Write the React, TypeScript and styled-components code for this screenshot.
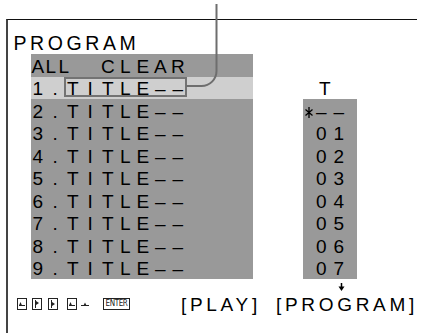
import React from 'react'
import styled, { createGlobalStyle } from 'styled-components'

const GlobalStyle = createGlobalStyle`
  body {
    margin: 0;
    background: #fff;
    color: #000;
    font-family: 'Liberation Sans', Arial, sans-serif;
  }
`

const Screen = styled.div`
  position: relative;
  width: 427px;
  height: 333px;
  padding: 19px 0 0 6px;
  box-sizing: border-box;
  overflow: hidden;
`

const Frame = styled.div`
  width: 411px;
  height: 314px;
  border-top: 1px solid #111;
  border-left: 2px solid #444;
  box-sizing: border-box;
`

const Title = styled.div`
  height: 34px;
  padding: 13px 0 0 5.5px;
  box-sizing: border-box;
  font-size: 19.5px;
  line-height: 20px;
  letter-spacing: 3.6px;
`

const Body = styled.div`
  display: flex;
  align-items: flex-start;
  padding-left: 23px;
  height: 236px;
`

const List = styled.div`
  width: 222px;
  background: #999;
`

const Line = styled.div<{ $active?: boolean }>`
  height: 22.5px;
  padding-top: 1.5px;
  box-sizing: border-box;
  background: ${p => (p.$active ? '#cfcfcf' : 'transparent')};
  font-size: 19px;
  line-height: 22.5px;
`

const Cells = styled.div<{ $cols: string }>`
  display: grid;
  grid-template-columns: ${p => p.$cols};
  text-align: center;
  white-space: nowrap;
`

const Cell = styled.span<{ $col?: string }>`
  grid-column: ${p => p.$col || 'auto'};
`

const Pair = styled.span`
  grid-column: 2 / span 2;
  justify-self: start;
  margin-left: -1px;
  letter-spacing: 2.4px;
`

const Boxed = styled.span`
  grid-column: 3 / span 7;
  display: grid;
  grid-template-columns: repeat(7, 17.5px);
  height: 20.5px;
  margin-top: -1.5px;
  padding-top: 1.5px;
  box-sizing: border-box;
  box-shadow: inset 0 0 0 2px #737373;
`

const Side = styled.div`
  width: 54px;
  margin-left: 50px;
  padding-top: 22.5px;
`

const SideHead = styled.div`
  height: 22.5px;
  padding: 1.5px 0 0 16px;
  box-sizing: border-box;
  font-size: 19px;
  line-height: 22.5px;
`

const SideList = styled.div`
  background: #999;
`

const Star = styled.svg`
  display: block;
  margin: 6.5px 0 0 2px;
`

const DownMark = styled.svg`
  display: block;
  margin: 4px 0 0 35px;
`

const Footer = styled.div`
  display: flex;
  align-items: flex-start;
  padding: 4px 0 0 9px;
  font-size: 19px;
  line-height: 22px;
  letter-spacing: 3.7px;
  white-space: nowrap;
`

const Keys = styled.div`
  display: flex;
  align-items: center;
  margin-top: 4px;
`

const Key = styled.svg<{ $ml?: number }>`
  display: block;
  margin-left: ${p => p.$ml || 0}px;
`

const Enter = styled.span<{ $ml?: number }>`
  display: block;
  margin-left: ${p => p.$ml || 0}px;
  width: 27px;
  height: 12px;
  border: 1px solid #222;
  box-sizing: border-box;
  font-family: 'DejaVu Sans Condensed', 'Liberation Sans', sans-serif;
  font-size: 8px;
  line-height: 10px;
  letter-spacing: -0.4px;
  text-align: center;
  color: #222;
`

const Label = styled.span<{ $ml: number }>`
  margin-left: ${p => p.$ml}px;
`

const Connector = styled.svg`
  position: absolute;
  top: 0;
  left: 0;
  pointer-events: none;
`

const ROW_COLS = 'repeat(9, 17.5px)'
const SIDE_COLS = '9.5px 17.5px 17.5px'
const title = ['T', 'I', 'T', 'L', 'E', '–', '–']

const TitleRow = ({ n }: { n: number }) => (
  <Line>
    <Cells $cols={ROW_COLS} style={{ marginLeft: -2 }}>
      <Cell>{n}</Cell>
      <Cell>.</Cell>
      {title.map((c, i) => (
        <Cell key={i}>{c}</Cell>
      ))}
    </Cells>
  </Line>
)

const KeyIcon = ({ kind, ml }: { kind: number; ml?: number }) => (
  <Key $ml={ml} width={10} height={12} viewBox="0 0 10 12">
    <rect x={0.5} y={0.5} width={9} height={11} fill="none" stroke="#222" />
    {kind === 0 && (
      <>
        <path d="M2 7.5H8" stroke="#222" />
        <path d="M2 7.5L3.5 4L5 7.5Z" fill="#222" />
      </>
    )}
    {kind === 1 && (
      <>
        <path d="M3.5 2V10" stroke="#222" />
        <path d="M4 3L7 5L4 7Z" fill="#222" />
      </>
    )}
    {kind === 2 && (
      <>
        <path d="M3.5 2V10" stroke="#222" />
        <path d="M4 4L7 6L4 8Z" fill="#222" />
      </>
    )}
    {kind === 3 && (
      <>
        <path d="M2 7.5H8" stroke="#222" />
        <path d="M2 7.5L3.5 4L5 7.5Z" fill="#222" />
      </>
    )}
  </Key>
)

export default function App() {
  return (
    <>
      <GlobalStyle />
      <Screen>
        <Frame>
          <Title>PROGRAM</Title>
          <Body>
            <List>
              <Line>
                <Cells $cols={ROW_COLS} style={{ marginLeft: -2 }}>
                  <Cell>A</Cell>
                  <Pair>LL</Pair>
                  <Cell $col="5">C</Cell>
                  <Cell>L</Cell>
                  <Cell>E</Cell>
                  <Cell>A</Cell>
                  <Cell>R</Cell>
                </Cells>
              </Line>
              <Line $active>
                <Cells $cols={ROW_COLS} style={{ marginLeft: -2 }}>
                  <Cell>1</Cell>
                  <Cell>.</Cell>
                  <Boxed>
                    {title.map((c, i) => (
                      <Cell key={i}>{c}</Cell>
                    ))}
                  </Boxed>
                </Cells>
              </Line>
              {[2, 3, 4, 5, 6, 7, 8, 9].map(n => (
                <TitleRow key={n} n={n} />
              ))}
            </List>
            <Side>
              <SideHead>T</SideHead>
              <SideList>
                <Line>
                  <Cells $cols={SIDE_COLS}>
                    <Cell>
                      <Star width={8} height={11} viewBox="0 0 8 11">
                        <path d="M4 0V11M0.5 2.5L7.5 8.5M7.5 2.5L0.5 8.5" stroke="#000" strokeWidth={1.3} />
                      </Star>
                    </Cell>
                    <Cell>–</Cell>
                    <Cell>–</Cell>
                  </Cells>
                </Line>
                {['01', '02', '03', '04', '05', '06', '07'].map(v => (
                  <Line key={v}>
                    <Cells $cols={SIDE_COLS}>
                      <Cell $col="2">{v[0]}</Cell>
                      <Cell>{v[1]}</Cell>
                    </Cells>
                  </Line>
                ))}
              </SideList>
              <DownMark width={7} height={8} viewBox="0 0 7 8">
                <path d="M3.5 0V4" stroke="#000" strokeWidth={1.5} />
                <path d="M0.5 3.5H6.5L3.5 8Z" fill="#000" />
              </DownMark>
            </Side>
          </Body>
          <Footer>
            <Keys>
              <KeyIcon kind={0} />
              <KeyIcon kind={1} ml={5} />
              <KeyIcon kind={2} ml={6} />
              <KeyIcon kind={3} ml={9} />
              <Key $ml={4} width={8} height={6} viewBox="0 0 8 6">
                <path d="M0 4.5H8" stroke="#222" />
                <path d="M2.5 4.5L4 1.5L5.5 4.5Z" fill="#222" />
              </Key>
              <Enter $ml={14}>ENTER</Enter>
            </Keys>
            <Label $ml={51}>[PLAY]</Label>
            <Label $ml={15}>[PROGRAM]</Label>
          </Footer>
        </Frame>
        <Connector width={427} height={333} viewBox="0 0 427 333">
          <path d="M216.5 4V71A15 15 0 0 1 201.5 86H186" fill="none" stroke="#6e6e6e" strokeWidth={2} />
        </Connector>
      </Screen>
    </>
  )
}
